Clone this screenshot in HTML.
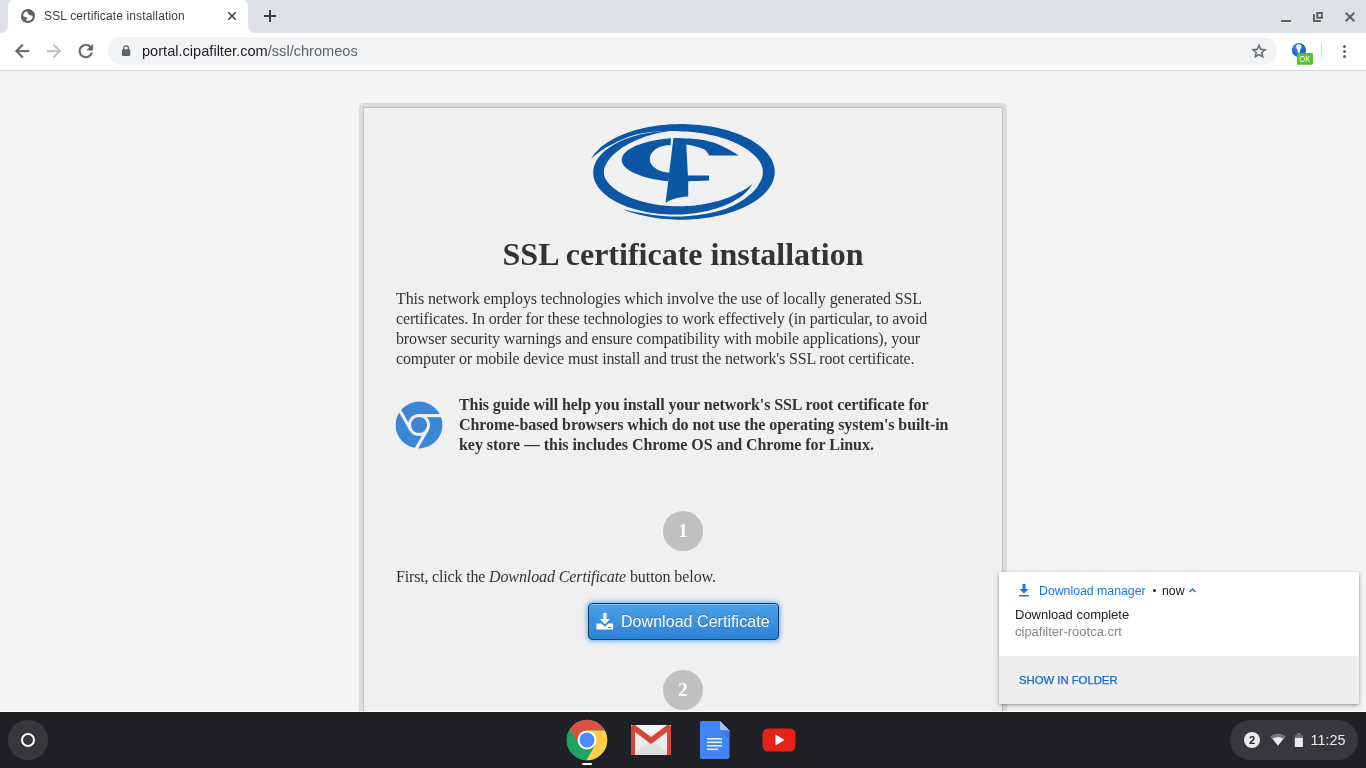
<!DOCTYPE html>
<html><head><meta charset="utf-8">
<style>
*{box-sizing:border-box;margin:0;padding:0}
html,body{width:1366px;height:768px;overflow:hidden;background:#f4f4f4;font-family:"Liberation Sans",sans-serif}
.abs{position:absolute}
.nw{white-space:nowrap}
#tabstrip{left:0;top:0;width:1366px;height:33px;background:#dee1e6}
#toolbar{left:0;top:33px;width:1366px;height:37px;background:#fff}
#tbborder{left:0;top:70px;width:1366px;height:1px;background:#d6d8db}
#omni{left:108px;top:37px;width:1169px;height:28px;border-radius:14px;background:#f1f3f4}
#page{left:0;top:71px;width:1366px;height:640px;background:#f4f4f4;overflow:hidden}
.serif{font-family:"Liberation Serif",serif;color:#333}
.p16{font-size:16px;line-height:20px}
#shelf{left:0;top:711px;width:1366px;height:57px;background:#202124}
</style></head><body><div style="position:absolute;left:0;top:0;width:1366px;height:768px;will-change:transform">

<!-- tab strip -->
<div id="tabstrip" class="abs"></div>
<svg class="abs" style="left:0;top:0" width="280" height="34" viewBox="0 0 280 34">
  <path d="M0 33 Q8 33 8 25 L8 6 Q8 0 14 0 L242 0 Q248 0 248 6 L248 25 Q248 33 256 33 Z" fill="#fff"/>
</svg>
<svg class="abs" style="left:20px;top:8px" width="16" height="16" viewBox="20 8 16 16"><circle cx="28" cy="16" r="5.9" fill="none" stroke="#5f6368" stroke-width="2.2"/><path d="M26.8 9.3 A7 7 0 0 1 35 16 L33.3 16 C32 15.3 30.6 15.6 29.2 14.9 C27.9 14.2 27.8 13 27.3 11.7 Z" fill="#5f6368"/><path d="M21 16.2 C23.2 16 25.3 16.6 27.6 18 C27.2 19.2 25.9 19.7 25.3 21 L24.6 22.3 A7 7 0 0 1 21 16.2 Z" fill="#5f6368"/></svg>
<div class="abs nw" style="left:44px;top:8px;font-size:12px;line-height:16px;color:#3c4043;letter-spacing:0.14px">SSL certificate installation</div>
<svg class="abs" style="left:226px;top:10px" width="12" height="12" viewBox="0 0 12 12"><path d="M2.3 2.3L9.7 9.7M9.7 2.3L2.3 9.7" stroke="#3c4043" stroke-width="1.6"/></svg>
<svg class="abs" style="left:262px;top:8px" width="16" height="16" viewBox="0 0 16 16"><path d="M8 2V14M2 8H14" stroke="#3c4043" stroke-width="2"/></svg>
<!-- window controls -->
<div class="abs" style="left:1281px;top:20px;width:10px;height:2px;background:#5f6368"></div>
<svg class="abs" style="left:1313px;top:12px" width="10" height="10" viewBox="0 0 10 10"><path d="M4.3 1.1h4.6v4.6H4.3z" fill="none" stroke="#5f6368" stroke-width="2"/><path d="M1 2V8.9H7.9" fill="none" stroke="#5f6368" stroke-width="2"/></svg>
<svg class="abs" style="left:1344px;top:11px" width="12" height="12" viewBox="0 0 12 12"><path d="M1.7 1.7L10.3 10.3M10.3 1.7L1.7 10.3" stroke="#5f6368" stroke-width="2"/></svg>


<!-- toolbar -->
<div id="toolbar" class="abs"></div>
<div id="omni" class="abs"></div>
<svg class="abs" style="left:11px;top:40px" width="21" height="21" viewBox="0 0 24 24"><path transform="translate(0.69 0.69)" fill="#5f6368" stroke="#5f6368" stroke-width="0.4" d="M20 11H7.830l5.590-5.590L12 4l-8 8 8 8 1.410-1.410L7.830 13H20v-2z"/></svg>
<svg class="abs" style="left:43px;top:40px" width="21" height="21" viewBox="0 0 24 24"><path transform="translate(0.69 0.69)" fill="#bdc1c6" stroke="#bdc1c6" stroke-width="0.4" d="M4 11H16.170l-5.590-5.590L12 4l8 8-8 8-1.410-1.410L16.170 13H4v-2z"/></svg>
<svg class="abs" style="left:75px;top:40px" width="21" height="21" viewBox="0 0 24 24"><path transform="translate(0.40 0.69)" fill="#5f6368" stroke="#5f6368" stroke-width="0.4" d="M17.650 6.350C16.200 4.900 14.210 4 12 4c-4.420 0-7.990 3.580-7.990 8s3.570 8 7.990 8c3.730 0 6.840-2.550 7.730-6h-2.080c-.820 2.330-3.040 4-5.650 4-3.310 0-6-2.690-6-6s2.690-6 6-6c1.660 0 3.140.690 4.220 1.780L13 11h7V4l-2.350 2.350z"/></svg>
<svg class="abs" style="left:121px;top:44px" width="10" height="13" viewBox="0 0 10 13"><path d="M2.75 5.6V4.2A2.35 2.35 0 0 1 7.45 4.2V5.6" fill="none" stroke="#5f6368" stroke-width="1.3"/><rect x="1" y="5.3" width="8.2" height="6.7" rx="0.8" fill="#5f6368"/></svg>
<div class="abs nw" style="left:142px;top:42px;font-size:14.6px;line-height:18px;color:#202124">portal.cipafilter.com<span style="color:#5f6368">/ssl/chromeos</span></div>
<svg class="abs" style="left:1250px;top:42px" width="18" height="18" viewBox="0 0 24 24"><path transform="translate(0 0.4)" fill="#5f6368" stroke="#5f6368" stroke-width="0.3" d="M22 9.240l-7.190-.620L12 2 9.190 8.630 2 9.240l5.460 4.730L5.820 21 12 17.270 18.180 21l-1.630-7.030L22 9.240zM12 15.400l-3.760 2.270 1-4.280-3.320-2.880 4.380-.380L12 6.100l1.710 4.040 4.380.380-3.320 2.880 1 4.280L12 15.400z"/></svg>
<svg class="abs" style="left:1290px;top:41px" width="26" height="26" viewBox="0 0 26 26">
  <defs><radialGradient id="eg" cx="0.35" cy="0.3" r="0.8"><stop offset="0" stop-color="#3d8ce0"/><stop offset="1" stop-color="#0d4fb0"/></radialGradient></defs>
  <circle cx="8.9" cy="9" r="7.1" fill="url(#eg)"/>
  <circle cx="8.8" cy="5.9" r="2.6" fill="#fff"/>
  <rect x="7.6" y="6" width="2.4" height="5.5" fill="#fff"/>
  <ellipse cx="8.8" cy="4.9" rx="0.8" ry="0.45" fill="#2a66c0"/>
  <rect x="6.9" y="12" width="16.1" height="11.8" rx="1.6" fill="#56c42c"/>
  <text x="14.8" y="20.9" text-anchor="middle" font-family="Liberation Sans" font-size="9.6" textLength="11" lengthAdjust="spacingAndGlyphs" fill="#fff">OK</text>
</svg>
<div class="abs" style="left:1321px;top:43px;width:1px;height:16px;background:#dadce0"></div>
<div class="abs" style="left:1343px;top:45px;width:3px;height:3px;border-radius:50%;background:#5f6368"></div>
<div class="abs" style="left:1343px;top:50px;width:3px;height:3px;border-radius:50%;background:#5f6368"></div>
<div class="abs" style="left:1343px;top:55px;width:3px;height:3px;border-radius:50%;background:#5f6368"></div>
<div id="tbborder" class="abs"></div>

<!-- page -->
<div id="page" class="abs"></div>
<!-- card -->
<div class="abs" style="left:359px;top:103px;width:648px;height:640px;border:4px solid #dcdcdc;border-radius:5px;background:#dcdcdc"></div>
<div class="abs" style="left:363px;top:107px;width:640px;height:640px;border:1px solid #c2c2c2;border-right-color:#c2c2c2;background:#f0f0f0"></div>
<svg class="abs" style="left:580px;top:115px" width="210" height="110" viewBox="580 115 210 110"><g fill="#0c56a6"><path d="M591.09 158.79 L592.26 156.85 L593.60 154.93 L595.09 153.05 L596.74 151.19 L598.54 149.38 L600.49 147.60 L602.59 145.87 L604.83 144.19 L607.20 142.56 L609.72 140.98 L612.36 139.46 L615.12 137.99 L618.01 136.59 L621.01 135.25 L624.11 133.97 L627.33 132.77 L630.63 131.64 L634.03 130.58 L637.52 129.59 L641.08 128.68 L644.72 127.85 L648.42 127.10 L652.19 126.43 L656.00 125.84 L659.86 125.34 L663.76 124.92 L667.69 124.58 L671.65 124.33 L675.62 124.17 L679.60 124.10 L683.58 124.11 L687.56 124.20 L691.53 124.39 L695.48 124.66 L699.40 125.01 L703.29 125.45 L707.14 125.98 L710.95 126.58 L714.70 127.27 L718.38 128.04 L722.00 128.89 L725.55 129.82 L729.01 130.82 L732.39 131.90 L735.68 133.05 L738.87 134.28 L741.95 135.56 L744.92 136.92 L747.78 138.34 L750.51 139.82 L753.12 141.36 L755.60 142.95 L757.95 144.59 L760.15 146.29 L762.21 148.03 L764.13 149.81 L765.89 151.64 L767.50 153.50 L768.96 155.39 L770.25 157.32 L771.39 159.27 L772.36 161.24 L773.16 163.23 L773.80 165.24 L774.27 167.26 L774.57 169.29 L774.70 171.33 L774.67 173.36 L774.46 175.39 L774.08 177.42 L773.54 179.43 L772.82 181.44 L771.95 183.42 L770.90 185.38 L769.70 187.32 L768.33 189.24 L766.81 191.12 L765.13 192.96 L763.29 194.77 L761.31 196.53 L759.19 198.25 L756.92 199.93 L754.51 201.55 L751.98 203.12 L749.31 204.63 L746.52 206.08 L743.61 207.47 L740.59 208.80 L737.46 210.06 L734.23 211.25 L730.90 212.37 L727.48 213.41 L723.98 214.38 L720.40 215.28 L716.75 216.09 L713.03 216.82 L709.26 217.48 L705.43 218.05 L701.56 218.53 L697.66 218.94 L693.72 219.25 L689.76 219.49 L685.79 219.63 L681.81 219.69 L677.82 219.66 L673.84 219.55 L669.88 219.34 L665.94 219.06 L662.02 218.69 L658.14 218.23 L654.30 217.69 L650.50 217.06 L646.77 216.36 L643.09 215.57 L639.49 214.70 L635.96 213.76 L632.51 212.74 L629.15 211.65 L625.88 210.48 L622.71 209.25 L622.71 209.25 L626.04 210.06 L629.44 210.79 L632.91 211.44 L636.41 212.13 L639.95 212.87 L643.55 213.54 L647.22 214.12 L650.93 214.66 L654.68 215.18 L658.47 215.62 L662.31 215.97 L666.17 216.24 L670.06 216.43 L673.96 216.53 L677.88 216.54 L681.79 216.46 L685.70 216.26 L689.60 215.97 L693.47 215.60 L697.31 215.14 L701.11 214.60 L704.87 213.98 L708.58 213.28 L712.23 212.50 L715.81 211.64 L719.32 210.71 L722.75 209.71 L726.09 208.63 L729.27 207.30 L732.34 205.88 L735.28 204.41 L738.10 202.88 L740.78 201.30 L743.33 199.68 L745.72 198.03 L747.96 196.33 L750.04 194.62 L751.95 192.89 L753.70 191.15 L755.27 189.41 L756.65 187.68 L757.86 185.98 L758.89 184.31 L759.74 182.68 L760.50 181.18 L761.22 179.80 L761.78 178.47 L762.21 177.20 L762.52 175.99 L762.71 174.82 L762.79 173.71 L762.78 172.64 L762.73 171.60 L762.76 170.55 L762.70 169.47 L762.54 168.34 L762.27 167.16 L761.87 165.93 L761.35 164.65 L760.69 163.31 L759.88 161.93 L758.91 160.51 L757.78 159.07 L756.50 157.60 L755.05 156.11 L753.48 154.58 L751.75 153.04 L749.85 151.51 L747.80 150.00 L745.60 148.52 L743.26 147.06 L740.77 145.65 L738.15 144.27 L735.39 142.95 L732.52 141.67 L729.53 140.45 L726.44 139.29 L723.24 138.22 L719.94 137.22 L716.55 136.29 L713.09 135.44 L709.56 134.66 L705.96 133.95 L702.31 133.32 L698.61 132.77 L694.87 132.30 L691.10 131.92 L687.30 131.61 L683.49 131.39 L679.66 131.21 L675.82 131.04 L671.99 130.97 L668.16 130.97 L664.35 131.06 L660.56 131.23 L656.80 131.48 L653.08 131.82 L649.40 132.23 L645.77 132.73 L642.20 133.30 L638.69 133.95 L635.26 134.70 L631.97 135.71 L628.77 136.79 L625.67 137.94 L622.68 139.15 L619.80 140.42 L617.03 141.75 L614.39 143.14 L611.84 144.50 L609.29 145.74 L606.87 147.04 L604.56 148.39 L602.38 149.79 L600.33 151.25 L598.40 152.76 L596.44 154.18 L594.54 155.64 L592.76 157.17 L591.09 158.79Z"/><path d="M672.74 130.63 L669.75 130.69 L666.77 130.80 L663.79 130.97 L660.83 131.20 L657.89 131.49 L654.97 131.83 L652.08 132.23 L649.21 132.68 L646.39 133.18 L643.59 133.74 L640.85 134.35 L638.14 135.02 L635.49 135.73 L632.89 136.50 L630.34 137.31 L627.86 138.18 L625.43 139.09 L623.08 140.04 L620.79 141.04 L618.58 142.08 L616.44 143.17 L614.39 144.29 L612.41 145.46 L610.52 146.65 L608.71 147.89 L606.99 149.16 L605.37 150.46 L603.84 151.79 L602.40 153.15 L601.07 154.53 L599.83 155.94 L598.69 157.37 L597.66 158.83 L596.73 160.30 L595.91 161.79 L595.19 163.29 L594.58 164.81 L594.08 166.33 L593.69 167.87 L593.41 169.41 L593.24 170.96 L593.18 172.50 L593.23 174.05 L593.39 175.60 L593.66 177.14 L594.04 178.67 L594.53 180.20 L595.13 181.72 L595.83 183.22 L596.65 184.71 L597.56 186.19 L598.59 187.64 L599.71 189.08 L600.94 190.49 L602.27 191.88 L603.69 193.24 L605.21 194.57 L606.83 195.87 L608.54 197.15 L610.33 198.38 L612.22 199.59 L614.19 200.75 L616.24 201.88 L618.36 202.97 L620.57 204.02 L622.85 205.02 L625.20 205.98 L627.61 206.89 L630.09 207.76 L632.63 208.58 L635.23 209.35 L637.88 210.07 L640.58 210.74 L643.32 211.36 L646.11 211.92 L648.93 212.44 L651.79 212.89 L654.68 213.29 L657.60 213.64 L660.54 213.93 L663.50 214.17 L666.47 214.34 L669.45 214.47 L672.45 214.53 L675.44 214.54 L678.43 214.49 L681.42 214.38 L684.39 214.21 L687.35 213.99 L690.30 213.72 L693.22 213.38 L696.12 212.99 L698.99 212.55 L701.82 212.05 L704.62 211.50 L707.37 210.89 L710.08 210.24 L712.74 209.53 L715.35 208.77 L717.91 207.96 L720.40 207.11 L722.83 206.20 L725.20 205.25 L727.49 204.26 L729.71 203.22 L731.86 202.15 L733.93 201.03 L735.92 199.87 L737.82 198.68 L739.64 197.45 L741.37 196.18 L743.01 194.89 L744.55 193.56 L746.00 192.20 L747.35 190.82 L748.60 189.42 L749.75 187.99 L750.80 186.54 L751.74 185.07 L752.58 183.58 L752.58 183.58 L751.31 184.81 L749.97 185.97 L748.56 187.07 L747.07 188.12 L745.52 189.11 L743.90 190.05 L742.21 190.94 L740.46 191.79 L738.64 192.59 L736.87 193.50 L735.09 194.47 L733.22 195.41 L731.29 196.31 L729.27 197.18 L727.19 198.01 L725.04 198.80 L722.82 199.54 L720.53 200.25 L718.19 200.92 L715.79 201.53 L713.33 202.11 L710.85 202.71 L708.32 203.29 L705.74 203.82 L703.12 204.31 L700.46 204.74 L697.76 205.12 L695.03 205.45 L692.27 205.73 L689.49 205.95 L686.69 206.12 L683.87 206.24 L681.05 206.30 L678.21 206.31 L675.38 206.27 L672.54 206.18 L669.72 206.03 L666.90 205.83 L664.09 205.58 L661.31 205.28 L658.55 204.92 L655.81 204.51 L653.11 204.05 L650.45 203.53 L647.82 202.97 L645.24 202.36 L642.71 201.71 L640.23 201.01 L637.81 200.26 L635.45 199.48 L633.15 198.66 L630.92 197.81 L628.76 196.91 L626.68 195.99 L624.68 195.03 L622.76 194.04 L620.93 193.03 L619.19 191.99 L617.54 190.93 L615.99 189.85 L614.54 188.77 L613.18 187.67 L611.94 186.57 L610.78 185.49 L609.71 184.43 L608.73 183.38 L607.86 182.34 L607.08 181.32 L606.41 180.33 L605.83 179.35 L605.33 178.41 L604.93 177.49 L604.60 176.60 L604.35 175.75 L604.17 174.92 L604.05 174.11 L603.99 173.32 L603.98 172.54 L603.92 171.76 L603.93 170.95 L603.99 170.12 L604.12 169.26 L604.33 168.36 L604.61 167.43 L604.98 166.46 L605.44 165.45 L605.99 164.42 L606.58 163.30 L607.22 162.11 L607.97 160.90 L608.85 159.65 L609.83 158.40 L610.93 157.13 L612.15 155.86 L613.47 154.59 L614.90 153.32 L616.40 151.99 L618.01 150.68 L619.72 149.38 L621.53 148.11 L623.43 146.86 L625.44 145.64 L627.53 144.45 L629.70 143.29 L631.96 142.17 L634.29 141.06 L636.68 139.96 L639.14 138.90 L641.67 137.89 L644.27 136.93 L646.92 136.01 L649.63 135.14 L652.40 134.39 L655.21 133.69 L658.06 133.04 L660.94 132.45 L663.86 131.91 L666.80 131.43 L669.76 131.00 L672.74 130.63Z"/><path d="M670.84 138.22 L668.13 138.46 L665.46 138.74 L662.82 139.07 L660.22 139.43 L657.68 139.83 L655.18 140.28 L652.75 140.76 L650.38 141.28 L648.07 141.83 L645.84 142.42 L643.69 143.04 L641.61 143.70 L639.62 144.38 L637.72 145.10 L635.91 145.85 L634.19 146.62 L632.58 147.42 L631.06 148.24 L629.65 149.08 L628.35 149.95 L627.16 150.84 L626.09 151.74 L625.12 152.66 L624.28 153.59 L623.55 154.53 L622.94 155.49 L622.45 156.45 L622.09 157.42 L621.84 158.40 L621.72 159.38 L621.73 160.35 L621.85 161.33 L622.10 162.31 L622.47 163.28 L622.97 164.24 L623.58 165.19 L624.32 166.14 L625.17 167.07 L626.14 167.99 L627.22 168.89 L628.42 169.77 L629.72 170.64 L631.14 171.48 L632.65 172.30 L634.28 173.10 L635.99 173.87 L637.81 174.62 L639.72 175.33 L641.71 176.02 L643.79 176.67 L645.95 177.29 L648.19 177.88 L650.49 178.43 L652.87 178.95 L655.31 179.43 L657.80 179.87 L660.35 180.27 L662.95 180.63 L665.59 180.95 L668.27 181.23 L669.63 172.57 L668.57 172.54 L667.51 172.47 L666.46 172.36 L665.42 172.21 L664.39 172.03 L663.38 171.81 L662.38 171.56 L661.41 171.27 L660.46 170.95 L659.54 170.59 L658.64 170.20 L657.78 169.78 L656.95 169.33 L656.16 168.85 L655.40 168.34 L654.69 167.80 L654.02 167.24 L653.39 166.66 L652.81 166.06 L652.27 165.43 L651.79 164.79 L651.35 164.13 L650.97 163.46 L650.64 162.77 L650.36 162.07 L650.14 161.37 L649.97 160.65 L649.86 159.93 L649.81 159.21 L649.81 158.49 L649.86 157.77 L649.97 157.05 L650.14 156.34 L650.36 155.63 L650.64 154.93 L650.97 154.25 L651.35 153.57 L651.79 152.91 L652.27 152.27 L652.80 151.65 L653.39 151.04 L654.01 150.46 L654.68 149.90 L655.40 149.37 L656.15 148.86 L656.95 148.38 L657.77 147.92 L658.64 147.50 L659.53 147.11 L660.45 146.75 L661.40 146.43 L662.38 146.14 L663.37 145.89 L664.38 145.67 L665.41 145.49 L666.45 145.34 L667.50 145.23 L668.56 145.16 L669.62 145.13 L670.68 145.14Z"/><path d="M673.4 137.9 C679 138 684 138.1 690 138.6 C697 139.2 703 140 709.25 141.4 C715 142.8 719 144.4 724 147 C729 149.5 734 152.3 738.9 155.5 L709.2 155.5 C707.8 153 706.5 151.2 705.3 150 C702.9 148.5 700.2 147.5 697.5 146.9 C693.8 145.9 690 145.1 686.3 144.6 L687.9 175.4 L709 175.4 L709 180.6 C700 181 694 181.2 688.2 181.3 L688.2 196.6 C682 196.7 672 198.5 665.6 202.9 Z"/></g></svg>
<div class="abs nw serif" style="left:359px;top:233.8px;width:648px;text-align:center;font-size:32px;line-height:40px;font-weight:bold">SSL certificate installation</div>
<div class="abs nw serif p16" style="left:396px;top:289.4px">
<div style="letter-spacing:-0.1068px">This network employs technologies which involve the use of locally generated SSL</div>
<div style="letter-spacing:-0.1605px">certificates. In order for these technologies to work effectively (in particular, to avoid</div>
<div style="letter-spacing:-0.1448px">browser security warnings and ensure compatibility with mobile applications), your</div>
<div style="letter-spacing:-0.1558px">computer or mobile device must install and trust the network's SSL root certificate.</div>
</div>
<svg class="abs" style="left:395px;top:401px" width="48" height="48" viewBox="-24 -24 48 48">
  <circle cx="0" cy="0" r="23.4" fill="#3b87d6"/>
  <g fill="#f0f0f0">
    <rect x="0" y="-11" width="26" height="3.2"/>
    <rect x="0" y="-11" width="26" height="3.2" transform="rotate(120)"/>
    <rect x="0" y="-11" width="26" height="3.2" transform="rotate(240)"/>
  </g>
  <circle cx="0" cy="0" r="11" fill="#f0f0f0"/>
  <circle cx="0" cy="0" r="8" fill="#3b87d6"/>
</svg>
<div class="abs nw serif p16" style="left:459px;top:394.5px;font-weight:bold">
<div style="letter-spacing:-0.0941px">This guide will help you install your network's SSL root certificate for</div>
<div style="letter-spacing:-0.0796px">Chrome-based browsers which do not use the operating system's built-in</div>
<div style="letter-spacing:-0.0548px">key store &mdash; this includes Chrome OS and Chrome for Linux.</div>
</div>
<div class="abs serif" style="left:663px;top:511px;width:40px;height:40px;border-radius:50%;background:#c0c0c0;color:#fff;font-weight:bold;font-size:19px;line-height:40px;text-align:center">1</div>
<div class="abs nw serif p16" style="left:396px;top:567px"><span style="letter-spacing:-0.1756px">First, click the </span><i style="letter-spacing:-0.1051px">Download Certificate</i><span style="letter-spacing:-0.0709px"> button below.</span></div>
<div class="abs" style="left:588px;top:603px;width:191px;height:37px;border-radius:4px;border:1px solid #1c3d63;background:linear-gradient(#4aa2e8,#2d82d4);box-shadow:0 0 5px 1px rgba(70,160,240,0.85),inset 0 1px 0 rgba(255,255,255,0.3)"></div>
<svg class="abs" style="left:596px;top:611px" width="20" height="20" viewBox="0 0 20 20">
  <path d="M7.2 2.1h3.4v5.9h3.3l-5 5.2-5-5.2h3.3z" fill="#fff"/>
  <path d="M0.4 12.4h4.9l3.6 3.3 3.6-3.3h4.6v6.2h-16.7z" fill="#fff"/>
  <rect x="12.2" y="16" width="3" height="1.1" fill="#3a86d4"/>
</svg>
<div class="abs nw" style="left:621px;top:612px;font-size:16px;line-height:20px;color:#fff;letter-spacing:0.05px;text-shadow:0 -1px 0 rgba(0,0,0,0.25)">Download Certificate</div>
<div class="abs serif" style="left:663px;top:670px;width:40px;height:40px;border-radius:50%;background:#c0c0c0;color:#fff;font-weight:bold;font-size:19px;line-height:40px;text-align:center">2</div>

<!-- shelf -->
<div class="abs" style="left:0;top:711px;width:1366px;height:1px;background:#fff"></div>

<!-- notification -->
<div class="abs" style="left:999px;top:572px;width:360px;height:132px;background:#fff;border-radius:2px;box-shadow:0 1px 3px rgba(0,0,0,0.3),0 2px 6px rgba(0,0,0,0.15);overflow:hidden">
  <div class="abs" style="left:0;top:84px;width:360px;height:48px;background:#eeeeee"></div>
</div>
<svg class="abs" style="left:1016px;top:582px" width="16" height="16" viewBox="0 0 16 16"><path d="M6.5 2h3v5h3l-4.5 4.5L3.5 7h3z M3 13h10v1.6H3z" fill="#1a73e8"/></svg>
<div class="abs nw" style="left:1039px;top:583px;font-size:12.3px;line-height:16px;color:#1a73e8">Download manager</div>
<div class="abs" style="left:1153px;top:589px;width:3px;height:3px;border-radius:50%;background:#202124"></div>
<div class="abs nw" style="left:1162px;top:583px;font-size:12.3px;line-height:16px;color:#202124">now</div>
<svg class="abs" style="left:1188px;top:586px" width="9" height="9" viewBox="0 0 9 9"><path d="M1.5 6L4.5 3 7.5 6" fill="none" stroke="#1a73e8" stroke-width="1.5"/></svg>
<div class="abs nw" style="left:1015px;top:607px;font-size:13px;line-height:16px;color:#202124">Download complete</div>
<div class="abs nw" style="left:1015px;top:624px;font-size:13px;line-height:16px;color:#80868b">cipafilter-rootca.crt</div>
<div class="abs nw" style="left:1019px;top:672px;font-size:11.3px;line-height:16px;color:#1967d2;-webkit-text-stroke:0.25px #1967d2;letter-spacing:0px">SHOW IN FOLDER</div>
<div id="shelf" class="abs" style="top:712px;height:56px"></div>
<div class="abs" style="left:8px;top:720px;width:40px;height:40px;border-radius:50%;background:#37383b"></div>
<div class="abs" style="left:21px;top:733px;width:14px;height:14px;border-radius:50%;border:2px solid #fff"></div>
<!-- chrome app icon -->
<svg class="abs" style="left:566px;top:719px" width="42" height="42" viewBox="-21 -21 42 42">
  <defs><clipPath id="cc"><circle r="20.3"/></clipPath></defs>
  <g clip-path="url(#cc)">
    <circle r="21" fill="#1da462"/>
    <path d="M0 -9.40 L100 -9.40 L100 -100 L-100 -100 L-58.14 -81.90 L-8.14 4.70 L0 0Z" fill="#dd5144"/>
    <path d="M0 -9.40 L100 -9.40 L100 -100 L-100 -100 L-58.14 -81.90 L-8.14 4.70 L0 0Z" fill="#ffcd46" transform="rotate(120)"/>
    <path d="M0 -9.40 L100 -9.40 L100 -100 L-100 -100 L-58.14 -81.90 L-8.14 4.70 L0 0Z" fill="#1da462" transform="rotate(240)"/>
  </g>
  <circle r="9.4" fill="#fff"/>
  <circle r="7.5" fill="#4c8bf5"/>
</svg>
<div class="abs" style="left:582px;top:763px;width:10px;height:2px;background:#fff;border-radius:1px"></div>
<!-- gmail -->
<svg class="abs" style="left:630px;top:724px" width="42" height="32" viewBox="0 0 42 32">
  <rect x="1" y="1" width="40" height="30" rx="2" fill="#ececec"/>
  <path d="M1 31 L21 16 L41 31 Z" fill="#e0e0e0"/>
  <path d="M1 3 L21 18 L41 3 L41 1 L1 1Z" fill="#f5f5f5"/>
  <path d="M1 3 Q1 1 3 1 L5 1 L21 13 L37 1 L39 1 Q41 1 41 3 L41 30 Q41 31 40 31 L37 31 L37 8 L21 20 L5 8 L5 31 L2 31 Q1 31 1 30 Z" fill="#d44638"/>
</svg>
<!-- docs -->
<svg class="abs" style="left:699px;top:720px" width="32" height="40" viewBox="0 0 32 40">
  <path d="M3 1 H21 L30.5 10.5 V37 Q30.5 39 28.5 39 H3 Q1 39 1 37 V3 Q1 1 3 1Z" fill="#4285f4"/>
  <path d="M21 1 L30.5 10.5 H23 Q21 10.5 21 8.5Z" fill="#a1c2fa"/>
  <path d="M21 10.5 L30.5 20 V10.5Z" fill="#3b6fd4" opacity="0.6"/>
  <g fill="#f1f1f1"><rect x="8" y="18" width="15" height="1.6"/><rect x="8" y="21.5" width="15" height="1.6"/><rect x="8" y="25" width="15" height="1.6"/><rect x="8" y="28.5" width="11" height="1.6"/></g>
</svg>
<!-- youtube -->
<svg class="abs" style="left:762px;top:728px" width="34" height="24" viewBox="0 0 34 24">
  <rect x="0.5" y="0.5" width="33" height="23" rx="5.5" fill="#e62117"/>
  <path d="M13.5 6.5 L22.5 12 L13.5 17.5Z" fill="#fff"/>
</svg>
<!-- tray -->
<div class="abs" style="left:1230px;top:720px;width:128px;height:40px;border-radius:20px;background:#37383b"></div>
<div class="abs" style="left:1243.7px;top:731.7px;width:16.6px;height:16.6px;border-radius:50%;background:#e8eaed;color:#202124;font-size:11px;font-weight:bold;line-height:16.6px;text-align:center">2</div>
<svg class="abs" style="left:1269px;top:733px" width="18" height="15" viewBox="0 0 18 15">
  <path d="M1.62 3.62 A11.7 11.7 0 0 1 16.38 3.62 L9 12.7 Z" fill="#e8eaed"/>
  <path d="M1.62 3.62 A11.7 11.7 0 0 1 16.38 3.62 L14.55 5.87 A8.8 8.8 0 0 0 3.45 5.87 Z" fill="#717276"/>
</svg>
<svg class="abs" style="left:1294px;top:732px" width="10" height="16" viewBox="0 0 10 16">
  <rect x="2.9" y="1" width="3.8" height="2.3" fill="#717276"/>
  <rect x="0.8" y="3.2" width="8.1" height="2.7" fill="#717276"/>
  <rect x="0.8" y="5.9" width="8.1" height="9.1" fill="#e8eaed"/>
</svg>
<div class="abs nw" style="left:1310.5px;top:731.5px;font-size:14.4px;line-height:16px;color:#e8eaed">11:25</div>

</div></body></html>
